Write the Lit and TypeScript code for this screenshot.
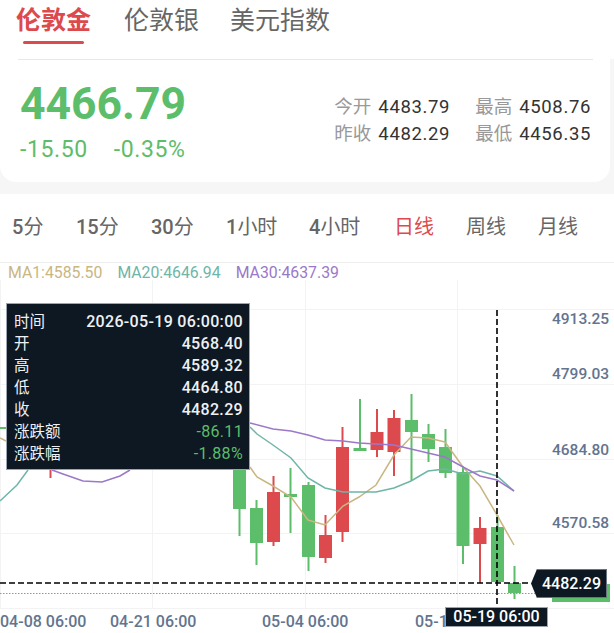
import { LitElement, html, css, svg } from "lit";
import { customElement } from "lit/decorators.js";

const G = "#5cbd6a", R = "#dc4a4d";
// x center, wick top, wick bottom, body top, body bottom, color
const candles: [number, number, number, number, number, string][] = [
  [239.5, 445, 536, 445, 509, G],
  [256.5, 500, 565, 508, 543, G],
  [273.5, 476, 546, 492, 542, R],
  [290.5, 468, 533, 494, 497, G],
  [308.5, 482, 571, 485, 557, G],
  [325.5, 515, 563, 535, 558, R],
  [342.5, 427, 542, 447, 532, R],
  [360, 399, 451, 448, 451, G],
  [377, 409, 457, 432, 450, R],
  [394, 410, 476, 418, 452, R],
  [411.5, 394, 481, 420, 432, G],
  [428.5, 424, 462, 434, 449, G],
  [445.5, 429, 478, 447, 473, G],
  [463, 466, 564, 472, 546, G],
  [480, 517, 583, 528, 544, R],
  [497.5, 515, 583, 527, 582, G],
  [514.5, 566, 599, 583, 593, G],
];
const MA_GOLD = "0,438 6,441 M250,467 257,477 273,486 291,497 308,520 325,525 343,506 359,497 376,485 394,455 411,437 428,438 445,442 463,467 480,486 497,515 514,545";
const MA_TEAL = "250,427 257,434 273,445 291,458 308,478 325,488 343,492 359,492 376,492 394,488 411,481 428,471 445,469 463,474 480,471 497,476 514,491";
const MA_TEAL_L = "0,501 17,485 28,470";
const MA_PURPLE = "250,423 273,429 291,431 308,435 325,440 343,441 359,443 376,444 394,445 411,449 428,453 445,457 463,467 480,476 497,480 514,491";
const MA_PURPLE_L = "52,470 63,474 83,481 102,482 120,476 130,470";

@customElement("app-root")
export class AppRoot extends LitElement {
  static styles = css`
    :host { display: block; width: 614px; height: 633px; background: #fff; overflow: hidden;
      font-family: Roboto, "Noto Sans CJK SC", sans-serif; position: relative; }
    .tabs { display: flex; height: 59px; padding: 1px 0 0 16px; gap: 33px; box-sizing: border-box; position: relative; }
    .tab { font-size: 25px; color: #666; line-height: 40px; position: relative; height: 40px; }
    .tab:last-child { margin-left: -2px; }
    .tab.on { color: #dc4a4d; font-weight: 700; }
    .tab.on::after { content: ""; position: absolute; left: 7px; width: 61px; top: 40px; height: 3px; border-radius: 2px; background: #dc4a4d; }
    .sheet { background: #f6f6f6; height: 135px; }
    .card { width: 610px; box-sizing: border-box; height: 123px; background: #fff; border-radius: 0 0 16px 16px; display: flex; justify-content: space-between; padding: 0 19px 0 17px; }
    .big { font-size: 44.5px; font-weight: 700; color: #5cbd6a; line-height: 50px; margin-top: 20px; padding-left: 3px; }
    .chg { font-size: 23px; color: #5cbd6a; display: flex; gap: 26px; padding-left: 3px; margin-top: 7px; line-height: 28px; letter-spacing: .6px; }
    .stats { display: grid; grid-template-columns: auto auto; column-gap: 25px; margin-top: 35px; align-self: flex-start; }
    .stat { display: flex; gap: 7px; font-size: 18.5px; line-height: 27px; align-items: center; }
    .stat span { color: #999; }
    .stat b { color: #333; font-weight: 400; letter-spacing: .65px; }
    .periods { height: 69px; font-size: 20px; color: #666; position: relative; border-bottom: 1px solid #eee; box-sizing: border-box; }
    .periods span { position: absolute; top: 19px; line-height: 28px; white-space: nowrap; }
    .periods b { font-weight: 500; }
    .periods .on { color: #dc4a4d; }
    .ma { display: flex; font-size: 15.8px; gap: 15px; padding-left: 8px; line-height: 20px; height: 20px; }
    .chart { position: absolute; left: 0; top: 0; width: 614px; height: 633px; }
    .tip { position: absolute; left: 6px; top: 303px; width: 244px; height: 167px; background: #0d1823; border: 1px solid #9aa5b1; box-sizing: border-box; color: #eef1f4; font-size: 15.5px; padding: 7px 6px 0 7px; display: grid; grid-template-rows: repeat(7, 22px); }
    .row { display: flex; justify-content: space-between; line-height: 22px; white-space: nowrap; }
    .row b { font-weight: 500; font-size: 16px; letter-spacing: .33px; }
    .row .g { color: #5cbd6a; font-weight: 400; }
    .axis { position: absolute; font-size: 15.5px; color: #63748f; font-weight: 500; line-height: 20px; white-space: nowrap; }
    .axis.x { font-size: 16px; top: 612px; }
    .price { position: absolute; left: 531px; top: 569px; width: 76px; height: 29px; background: #0d1823; color: #fff; font-size: 16px; font-weight: 500; line-height: 27px; text-align: center; border-top: 1px solid #6a7583; border-bottom: 1px solid #6a7583; border-right: 1px solid #6a7583; box-sizing: border-box; clip-path: polygon(6px 0, 100% 0, 100% 100%, 6px 100%, 0 50%); padding-left: 6px; }
    .time { position: absolute; left: 445px; top: 607px; width: 103px; height: 20px; background: #0d1823; border: 1px solid #9aa5b1; box-sizing: border-box; color: #fff; font-size: 16px; font-weight: 500; text-align: center; line-height: 18px; white-space: nowrap; }
  `;

  render() {
    const periods: [string, string, number, boolean?][] = [["5", "分", 12], ["15", "分", 76], ["30", "分", 151], ["1", "小时", 226], ["4", "小时", 309], ["", "日线", 394, true], ["", "周线", 466], ["", "月线", 538]];
    const axis: [string, number][] = [["4913.25", 309], ["4799.03", 364], ["4684.80", 440], ["4570.58", 513]];
    const xs: [string, number][] = [["04-08 06:00", 0], ["04-21 06:00", 110], ["05-04 06:00", 262], ["05-18 06:00", 415]];
    return html`
      <div class="tabs"><div class="tab on">伦敦金</div><div class="tab">伦敦银</div><div class="tab">美元指数</div></div>
      <div class="sheet">
      <div class="card">
        <div>
          <div class="big">4466.79</div>
          <div class="chg"><span>-15.50</span><span>-0.35%</span></div>
        </div>
        <div class="stats">
          <div class="stat"><span>今开</span><b>4483.79</b></div>
          <div class="stat"><span>最高</span><b>4508.76</b></div>
          <div class="stat"><span>昨收</span><b>4482.29</b></div>
          <div class="stat"><span>最低</span><b>4456.35</b></div>
        </div>
      </div>
      </div>
      <div class="periods">${periods.map(([d, t, x, on]) => html`<span class=${on ? "on" : ""} style="left:${x}px"><b>${d}</b>${t}</span>`)}</div>
      <div class="ma">
        <span style="color:#c9b682">MA1:4585.50</span><span style="color:#6fb5a8">MA20:4646.94</span><span style="color:#9b78c9">MA30:4637.39</span>
      </div>
      <svg class="chart" viewBox="0 0 614 633">
        <line x1="18" x2="593" y1="59.5" y2="59.5" stroke="#e8e8e8"/>
        ${[309, 384, 459, 533, 608].map((y) => svg`<line x1="0" x2="614" y1=${y + 0.5} y2=${y + 0.5} stroke="#f3f3f3"/>`)}
        ${[0, 152, 305, 457].map((x) => svg`<line x1=${x + 0.5} x2=${x + 0.5} y1="280" y2="608" stroke="#f3f3f3"/>`)}
        <rect x="0" y="427" width="6" height="2" fill=${G}/>
        <line x1="50.5" x2="50.5" y1="468" y2="478" stroke=${R} stroke-width="2"/>
        ${candles.map(([x, t, b, bt, bb, c]) => svg`
          <line x1=${x} x2=${x} y1=${t} y2=${b} stroke=${c} stroke-width="2"/>
          <rect x=${x - 6.5} y=${bt} width="13" height=${bb - bt} fill=${c}/>`)}
        <polyline points=${MA_PURPLE_L} fill="none" stroke="#9b78c9" stroke-width="1.5"/>
        <polyline points=${MA_TEAL_L} fill="none" stroke="#6fb5a8" stroke-width="1.5"/>
        <path d=${"M" + MA_GOLD} fill="none" stroke="#c9b682" stroke-width="1.5"/>
        <polyline points=${MA_TEAL} fill="none" stroke="#6fb5a8" stroke-width="1.5"/>
        <polyline points=${MA_PURPLE} fill="none" stroke="#9b78c9" stroke-width="1.5"/>
        <line x1="0" x2="531" y1="583" y2="583" stroke="#000" stroke-width="1.5" stroke-dasharray="6 3"/>
        <line x1="0" x2="552" y1="593.5" y2="593.5" stroke="#5cbd6a" stroke-width="1" stroke-dasharray="1.5 1.5"/>
        <line x1="497" x2="497" y1="310" y2="607" stroke="#000" stroke-width="1.6" stroke-dasharray="6 3"/>
        <rect x="552" y="584" width="58" height="18" fill=${G}/>
      </svg>
      ${axis.map(([t, y]) => html`<div class="axis" style="left:552px;top:${y}px">${t}</div>`)}
      ${xs.map(([t, x]) => html`<div class="axis x" style="left:${x}px">${t}</div>`)}
      <div class="price">4482.29</div>
      <div class="time">05-19 06:00</div>
      <div class="tip">
        <div class="row"><span>时间</span><b>2026-05-19 06:00:00</b></div>
        <div class="row"><span>开</span><b>4568.40</b></div>
        <div class="row"><span>高</span><b>4589.32</b></div>
        <div class="row"><span>低</span><b>4464.80</b></div>
        <div class="row"><span>收</span><b>4482.29</b></div>
        <div class="row"><span>涨跌额</span><b class="g">-86.11</b></div>
        <div class="row"><span>涨跌幅</span><b class="g">-1.88%</b></div>
      </div>
    `;
  }
}
